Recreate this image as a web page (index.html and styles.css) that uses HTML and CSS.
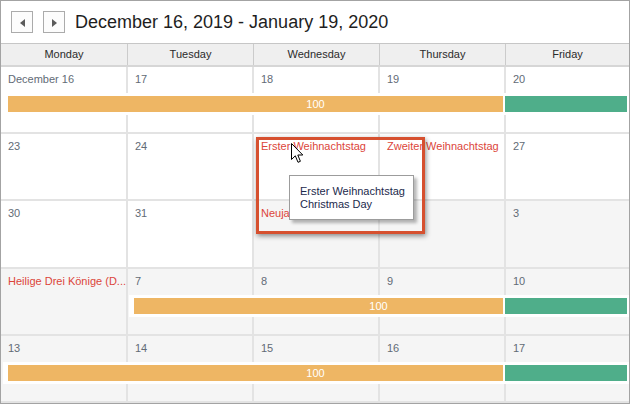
FILE: index.html
```html
<!DOCTYPE html>
<html>
<head>
<meta charset="utf-8">
<link rel="stylesheet" href="styles.css">
</head>
<body>
<div class="scheduler">
  <div class="toolbar">
    <button class="nav-btn" aria-label="Previous"><svg width="5" height="8" viewBox="0 0 5 8"><polygon points="5,0 0,4 5,8" fill="#5b5b5b"/></svg></button>
    <button class="nav-btn" aria-label="Next"><svg width="5" height="8" viewBox="0 0 5 8"><polygon points="0,0 5,4 0,8" fill="#5b5b5b"/></svg></button>
    <div class="range-title">December 16, 2019 - January 19, 2020</div>
  </div>
  <div class="day-header">
    <div class="day-name">Monday</div>
    <div class="day-name">Tuesday</div>
    <div class="day-name">Wednesday</div>
    <div class="day-name">Thursday</div>
    <div class="day-name">Friday</div>
  </div>
  <div class="weeks">
    <div class="week">
      <div class="cell">December 16</div>
      <div class="cell">17</div>
      <div class="cell">18</div>
      <div class="cell">19</div>
      <div class="cell">20</div>
      <div class="band band-mon">
        <div class="bar bar-orange">100</div>
        <div class="bar bar-green"></div>
      </div>
    </div>
    <div class="week">
      <div class="cell">23</div>
      <div class="cell">24</div>
      <div class="cell holiday">Erster Weihnachtstag</div>
      <div class="cell holiday">Zweiter Weihnachtstag</div>
      <div class="cell">27</div>
    </div>
    <div class="week">
      <div class="cell">30</div>
      <div class="cell">31</div>
      <div class="cell other holiday">Neujahr</div>
      <div class="cell other">2</div>
      <div class="cell other">3</div>
    </div>
    <div class="week">
      <div class="cell other holiday">Heilige Drei Könige (D...</div>
      <div class="cell other">7</div>
      <div class="cell other">8</div>
      <div class="cell other">9</div>
      <div class="cell other">10</div>
      <div class="band band-tue">
        <div class="bar bar-orange">100</div>
        <div class="bar bar-green"></div>
      </div>
    </div>
    <div class="week">
      <div class="cell other">13</div>
      <div class="cell other">14</div>
      <div class="cell other">15</div>
      <div class="cell other">16</div>
      <div class="cell other">17</div>
      <div class="band band-mon">
        <div class="bar bar-orange">100</div>
        <div class="bar bar-green"></div>
      </div>
    </div>
  </div>

  <div class="callout"></div>
  <div class="tooltip">
    <div>Erster Weihnachtstag</div>
    <div>Christmas Day</div>
  </div>
  <svg class="cursor" width="13" height="21" viewBox="0 0 13 21">
    <path d="M0.5 0.5 L0.5 16.5 L4.3 12.8 L7 19.3 L9.4 18.3 L6.8 12 L11.8 12 Z" fill="#ffffff" stroke="#000000" stroke-width="1" stroke-linejoin="miter"/>
  </svg>
</div>
</body>
</html>
```

FILE: styles.css
```css
* { box-sizing: border-box; }

html, body {
  margin: 0;
  padding: 0;
  background: #ffffff;
}

body {
  font-family: "Liberation Sans", Arial, sans-serif;
  font-size: 11px;
  color: #333333;
}

.scheduler {
  position: relative;
  width: 630px;
  height: 404px;
  border: 1px solid #a3a3a3;
  display: flex;
  flex-direction: column;
  background: #ffffff;
}

.toolbar {
  height: 42px;
  display: flex;
  align-items: flex-start;
  gap: 10px;
  padding: 10px 0 0 10px;
}

.nav-btn {
  width: 22px;
  height: 22px;
  margin: 0;
  padding: 0;
  border: 1px solid #ababab;
  background: #fcfcfc;
  display: flex;
  align-items: center;
  justify-content: center;
}

.nav-btn svg { display: block; margin-top: 1px; }

.range-title {
  font-size: 18px;
  line-height: 22px;
  color: #1e1e1e;
  white-space: nowrap;
}

.day-header {
  display: grid;
  grid-template-columns: 127px 126px 126px 126px 1fr;
  height: 24px;
  border-top: 1px solid #c6c6c6;
  border-bottom: 2px solid #d6d6d6;
  background: #efefef;
}

.day-name {
  text-align: center;
  line-height: 21px;
  color: #2b2b2b;
  border-right: 1px solid #cbcbcb;
}

.day-name:last-child { border-right: none; }

.weeks {
  flex: 1;
  display: grid;
  grid-template-rows: repeat(5, 1fr);
}

.week {
  display: grid;
  grid-template-columns: 127px 126px 126px 126px 1fr;
  grid-template-rows: 26px 22px 1fr;
}

.cell {
  grid-row: 1 / -1;
  background: #ffffff;
  border-right: 2px solid #e3e3e3;
  border-bottom: 2px solid #e3e3e3;
  padding: 6px 7px 0 7px;
  line-height: 13px;
  color: #626b76;
  white-space: nowrap;
  overflow: hidden;
}

.cell:nth-child(1) { grid-column: 1; }
.cell:nth-child(2) { grid-column: 2; }
.cell:nth-child(3) { grid-column: 3; }
.cell:nth-child(4) { grid-column: 4; }
.cell:nth-child(5) { grid-column: 5; border-right: none; }

.cell.other { background: #f5f5f5; }
.cell.holiday { color: #dc453a; }

.band {
  grid-row: 2;
  grid-column-end: 6;
  background: #ffffff;
  padding: 3px 2px 3px 5px;
  display: flex;
  gap: 2px;
  z-index: 1;
}

.band-mon { grid-column-start: 1; margin-left: 2px; }
.band-tue { grid-column-start: 2; margin-left: 1px; }

.bar {
  height: 16px;
  line-height: 16px;
  color: #ffffff;
}

.bar-orange {
  flex: 1;
  background: #eeb664;
  text-align: center;
  padding-left: 120px;
}

.bar-green {
  width: 122px;
  background: #4fae8a;
}

.callout {
  position: absolute;
  left: 255px;
  top: 136px;
  width: 169px;
  height: 97px;
  border: 3px solid #d6502f;
  box-shadow: 1px 2px 5px rgba(0, 0, 0, 0.45);
  z-index: 2;
}

.tooltip {
  position: absolute;
  left: 288px;
  top: 174px;
  width: 125px;
  height: 45px;
  border: 1px solid #9c9c9c;
  background: #ffffff;
  padding: 9px 0 0 10px;
  line-height: 13px;
  color: #1c2a4c;
  box-shadow: 3px 3px 3px rgba(0, 0, 0, 0.28);
  z-index: 3;
}

.cursor {
  position: absolute;
  left: 290px;
  top: 142px;
  z-index: 4;
}
```
